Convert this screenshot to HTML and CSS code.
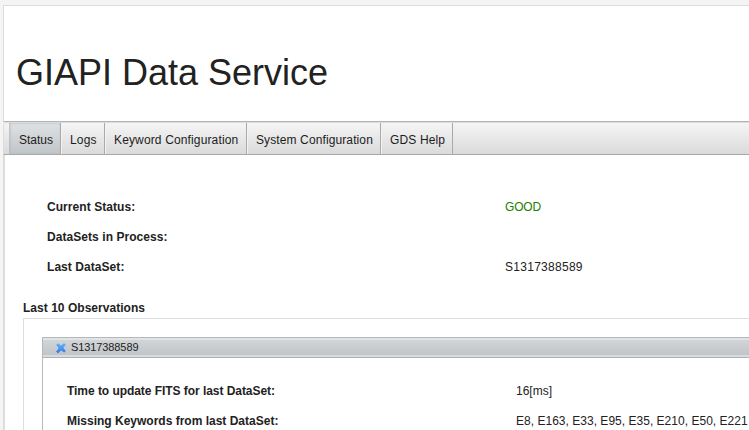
FILE: index.html
```html
<!DOCTYPE html>
<html lang="en">
<head>
<meta charset="utf-8">
<title>GIAPI Data Service</title>
<link rel="stylesheet" href="styles.css">
</head>
<body>
<header class="banner"><h1>GIAPI Data Service</h1></header>
<nav class="tabs">
  <a class="tab active">Status</a>
  <a class="tab logs">Logs</a>
  <a class="tab keywords">Keyword Configuration</a>
  <a class="tab system">System Configuration</a>
  <a class="tab help">GDS Help</a>
</nav>
<main class="content">
  <dl class="facts">
    <dt class="wide">Current Status:</dt><dd class="good">GOOD</dd>
    <dt class="wide">DataSets in Process:</dt><dd></dd>
    <dt class="wide">Last DataSet:</dt><dd class="dataset">S1317388589</dd>
  </dl>
  <h2>Last 10 Observations</h2>
  <div class="observations">
    <section class="panel">
      <div class="panel-title">
        <svg class="cross" viewBox="0 0 12 12">
          <defs><linearGradient id="blue" x2="0" y2="1"><stop stop-color="#65b5ef"/><stop offset="1" stop-color="#3978e8"/></linearGradient></defs>
          <path d="M1 3 3.2 1 6 3.6 9 .9 11 2.8 8.4 5.8 10.9 9 9.2 10.8 6.1 8.4 3 11.4 .9 9.5 3.7 6.1Z" fill="url(#blue)" stroke="#c9e4f8" stroke-width="1" paint-order="stroke"/>
        </svg>
        <span>S1317388589</span>
      </div>
      <dl class="facts panel-facts">
        <dt>Time to update FITS for last DataSet:</dt><dd>16[ms]</dd>
        <dt class="normal">Missing Keywords from last DataSet:</dt><dd class="missing">E8, E163, E33, E95, E35, E210, E50, E221</dd>
      </dl>
    </section>
  </div>
</main>
</body>
</html>
```
FILE: styles.css
```css
* { box-sizing: border-box; }
body {
  display: flex;
  flex-direction: column;
  height: 430px;
  margin: 0;
  padding: 5px 0 0 3px;
  overflow: hidden;
  background: #f4f4f4;
  color: #222;
  font: 12px/20px "Liberation Sans", Arial, sans-serif;
}
.banner {
  flex: none;
  height: 117px;
  padding: 45px 0 0 12px;
  border: 1px solid #ddd;
  border-right: 0;
  border-bottom-color: #b5b5b5;
  background: #fff;
}
h1 { margin: 0; font-size: 36px; font-weight: 400; line-height: 44px; }
.tabs {
  display: flex;
  flex: none;
  height: 33px;
  padding-left: 5px;
  border-top: 1px solid #dadada;
  border-bottom: 1px solid #a8a8a8;
  border-left: 1px solid #ddd;
  border-top-left-radius: 4px;
  background: linear-gradient(#f5f5f5, #dadada);
}
.tab {
  padding: 7px 0 0 9px;
  border-right: 1px solid #aaa;
  box-shadow: inset 1px 0 #f3f3f3;
  color: #1c1c1c;
  letter-spacing: 0.14px;
  white-space: nowrap;
}
.active {
  width: 52px;
  padding-left: 10px;
  background: linear-gradient(#dfe2e4, #c0c5c9);
  box-shadow: inset 1px 0 3px #b4b9bd;
  letter-spacing: 0;
}
.logs { width: 44px; }
.keywords { width: 142px; }
.system { width: 134px; letter-spacing: 0.11px; }
.help { width: 72px; }
.content {
  flex: 1;
  min-height: 0;
  padding: 42px 0 0 18px;
  overflow: hidden;
  border-left: 2px solid #ddd;
  background: #fff;
}
.facts {
  display: grid;
  grid-template-columns: 458px 1fr;
  grid-auto-rows: 30px;
  margin: 0 0 0 24px;
}
dt { font-weight: 700; letter-spacing: -0.05px; }
dd { margin: 0; white-space: nowrap; }
.wide { letter-spacing: 0.06px; }
.normal { letter-spacing: 0; }
.good { color: #208000; letter-spacing: -0.2px; }
.dataset { letter-spacing: 0.28px; }
.missing { letter-spacing: 0.02px; }
h2 { margin: 11px 0 0; font-size: 12px; line-height: 20px; letter-spacing: 0.03px; }
.observations {
  height: 200px;
  padding: 18px 0 0 18px;
  border: 1px solid #ddd;
  border-right: 0;
}
.panel { height: 180px; border: 1px solid #b5b8ba; border-right: 0; }
.panel-title {
  display: flex;
  align-items: center;
  height: 20px;
  padding: 0 0 2px 12px;
  border-bottom: 1px solid #afb2b4;
  background: linear-gradient(#e1e3e4 0 2px, #d2d5d7 2px, #c1c5c8 17px, #d9dcde 17px);
  font-size: 11px;
  letter-spacing: -0.1px;
}
.cross { width: 12px; height: 12px; margin: 2px 4px 0 0; }
.panel-facts { grid-template-columns: 449px 1fr; padding-top: 23px; }
```
